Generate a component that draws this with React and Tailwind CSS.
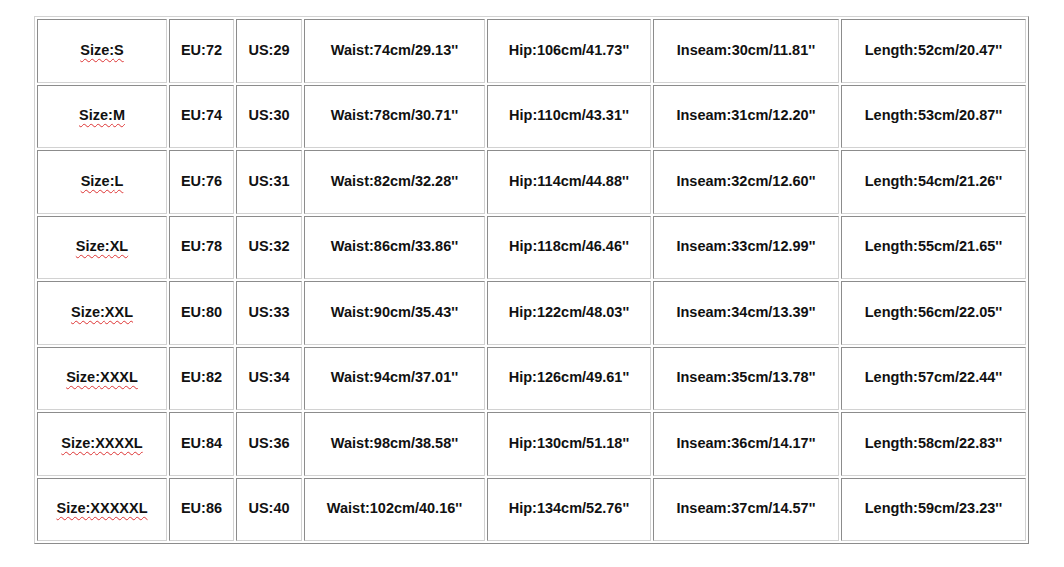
const rows = [
  ['S', 72, 29, '74cm/29.13', '106cm/41.73', '30cm/11.81', '52cm/20.47'],
  ['M', 74, 30, '78cm/30.71', '110cm/43.31', '31cm/12.20', '53cm/20.87'],
  ['L', 76, 31, '82cm/32.28', '114cm/44.88', '32cm/12.60', '54cm/21.26'],
  ['XL', 78, 32, '86cm/33.86', '118cm/46.46', '33cm/12.99', '55cm/21.65'],
  ['XXL', 80, 33, '90cm/35.43', '122cm/48.03', '34cm/13.39', '56cm/22.05'],
  ['XXXL', 82, 34, '94cm/37.01', '126cm/49.61', '35cm/13.78', '57cm/22.44'],
  ['XXXXL', 84, 36, '98cm/38.58', '130cm/51.18', '36cm/14.17', '58cm/22.83'],
  ['XXXXXL', 86, 40, '102cm/40.16', '134cm/52.76', '37cm/14.57', '59cm/23.23'],
]

function Cell({ children }) {
  return (
    <div className="flex items-center justify-center border border-t-[#8c8c8c] border-l-[#8c8c8c] border-r-[#d2d2d2] border-b-[#d2d2d2] bg-white">
      {children}
    </div>
  )
}

export default function App() {
  return (
    <div
      className="w-[1064px] h-[567px] bg-white pt-[16px] pl-[34px] text-[14.5px] font-bold text-[#111]"
      style={{ fontFamily: '"Liberation Sans", Arial, sans-serif' }}
    >
      <div className="inline-grid grid-cols-[130px_65px_66px_181px_164px_186px_185px] auto-rows-[63.5px] gap-[2px] p-[2px] border border-t-[#d2d2d2] border-l-[#d2d2d2] border-r-[#8c8c8c] border-b-[#8c8c8c]">
        {rows.map(([size, eu, us, waist, hip, inseam, length]) => (
          <div key={size} className="contents">
            <Cell>
              <span className="underline decoration-wavy decoration-[#d33] decoration-1 underline-offset-[3px]">
                Size:{size}
              </span>
            </Cell>
            <Cell>EU:{eu}</Cell>
            <Cell>US:{us}</Cell>
            <Cell>Waist:{waist}''</Cell>
            <Cell>Hip:{hip}''</Cell>
            <Cell>Inseam:{inseam}''</Cell>
            <Cell>Length:{length}''</Cell>
          </div>
        ))}
      </div>
    </div>
  )
}
